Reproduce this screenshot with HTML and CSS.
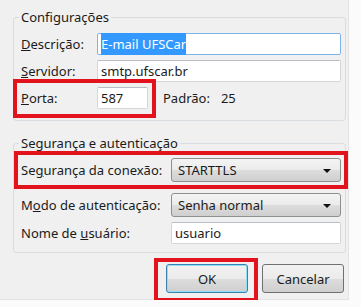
FILE: index.html
```html
<!DOCTYPE html>
<html lang="pt-BR">
<head>
    <meta charset="UTF-8">
    <meta name="viewport" content="width=device-width, initial-scale=1.0">
    <title>Servidor SMTP</title>
    <link rel="stylesheet" href="styles.css">
</head>
<body>
    <div class="dialog">
        <!-- Configurações -->
        <div class="group group-config">
            <span class="legend">Configurações</span>
            <div class="row">
                <label class="lbl"><u>D</u>escrição:</label>
                <div class="field focused"><span class="sel">E-mail UFSCar</span></div>
            </div>
            <div class="row">
                <label class="lbl"><u>S</u>ervidor:</label>
                <div class="field">smtp.ufscar.br</div>
            </div>
            <div class="row">
                <div class="mark mark-port">
                    <label class="lbl"><u>P</u>orta:</label>
                    <div class="field port">587</div>
                </div>
                <span class="default-lbl">Padrão:</span>
                <span class="default-val">25</span>
            </div>
        </div>

        <!-- Segurança e autenticação -->
        <div class="group group-sec">
            <span class="legend">Segurança e autenticação</span>
            <div class="row row-wide mark mark-sec">
                <label class="lbl wide">Se<u>g</u>urança da conexão:</label>
                <div class="combo">STARTTLS<span class="arrow"></span></div>
            </div>
            <div class="row row-wide row-mode">
                <label class="lbl wide">M<u>o</u>do de autenticação:</label>
                <div class="combo">Senha normal<span class="arrow"></span></div>
            </div>
            <div class="row row-wide">
                <label class="lbl wide">Nome de <u>u</u>suário:</label>
                <div class="field">usuario</div>
            </div>
        </div>

        <div class="buttons">
            <div class="mark mark-ok">
                <button class="btn btn-default">OK</button>
            </div>
            <button class="btn">Cancelar</button>
        </div>
    </div>
</body>
</html>
```

FILE: styles.css
```css
* {
    box-sizing: border-box;
}
body {
    margin: 0;
    padding: 0;
    background-color: #fbfbfb;
    font-family: "Noto Sans", "Open Sans", sans-serif;
    font-size: 13px;
    color: #1b1b1b;
}
.dialog {
    width: 349px;
    height: 300px;
    padding-top: 17px;
    background-color: #f0f0f0;
    border-right: 1px solid #e2e2e2;
    border-bottom: 1px solid #e2e2e2;
}
.group {
    position: relative;
    margin: 0 2px 0 13px;
    padding: 15px 4px 0 7px;
    border: 1px solid #d8dde1;
    border-radius: 3px;
}
.legend {
    position: absolute;
    top: -9px;
    left: 5px;
    padding: 0 2px;
    line-height: 16px;
    background-color: #f0f0f0;
}
.group-config {
    height: 104px;
}
.group-sec {
    height: 110px;
    margin-top: 22px;
    padding-top: 14px;
}
.row {
    display: flex;
    align-items: center;
    height: 22px;
    margin-bottom: 5px;
}
.lbl {
    width: 76px;
    flex: none;
}
.lbl.wide {
    width: 150px;
}
.field {
    flex: 1;
    height: 22px;
    line-height: 20px;
    padding: 0 3px;
    background-color: #fff;
    border: 1px solid #d3d7dc;
    border-top-color: #b9bec4;
    border-radius: 2px;
    white-space: nowrap;
}
.field.focused {
    border-color: #7eb4ea;
}
.sel {
    background-color: #3399ff;
    color: #fff;
    padding: 2px 0;
}
.field.port {
    flex: none;
    width: 51px;
}
.mark {
    outline: 4px solid #e3131d;
}
.mark-port {
    display: flex;
    align-items: center;
    outline-offset: 4px;
    padding-bottom: 1px;
    margin-bottom: -1px;
}
.default-lbl {
    margin-left: 15px;
}
.default-val {
    margin-left: 11px;
}
.row-wide {
    height: 24px;
}
.mark-sec {
    outline-offset: 3px;
    margin-bottom: 11px;
}
.row-mode {
    margin-bottom: 4px;
}
.combo {
    flex: 1;
    position: relative;
    height: 24px;
    line-height: 22px;
    padding: 0 6px;
    border: 1px solid #8e8f8f;
    border-radius: 3px;
    background: linear-gradient(#f4f4f4, #ebebeb 50%, #dddddd 51%, #cfcfcf);
}
.arrow {
    position: absolute;
    right: 9px;
    top: 10px;
    border-left: 4px solid transparent;
    border-right: 4px solid transparent;
    border-top: 4px solid #111;
}
.buttons {
    display: flex;
    justify-content: flex-end;
    gap: 14px;
    margin-top: 11px;
    padding-right: 4px;
}
.btn {
    font-family: inherit;
    font-size: 13px;
    color: #1b1b1b;
    width: 82px;
    height: 29px;
    padding: 0;
    border: 1px solid #707070;
    border-radius: 3px;
    background: linear-gradient(#f2f2f2, #ebebeb 50%, #dddddd 51%, #cfcfcf);
}
.btn-default {
    display: block;
    border-color: #3c7fb1;
    box-shadow: inset 0 0 0 1px #8fe0f7;
}
.mark-ok {
    padding: 2px 6px 5px 8px;
    margin: -2px -6px -5px -8px;
}
```
